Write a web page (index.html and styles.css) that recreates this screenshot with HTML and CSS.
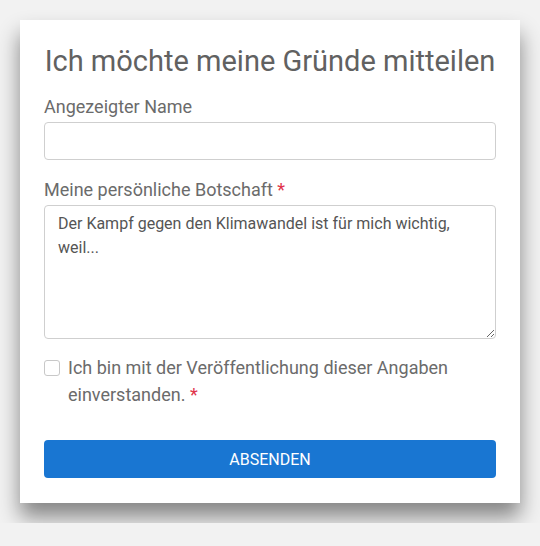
FILE: index.html
```html
<!DOCTYPE html>
<html lang="de">
<head>
    <meta charset="UTF-8">
    <meta name="viewport" content="width=device-width, initial-scale=1.0">
    <title>Meine Gründe</title>
    <link rel="stylesheet" href="styles.css">
</head>
<body>
    <div class="card">
        <h2 class="title">Ich möchte meine Gründe mitteilen</h2>
        <form class="reason-form">
            <label class="field-label" for="displayName">Angezeigter Name</label>
            <input class="field-input" type="text" id="displayName" name="displayName">

            <label class="field-label" for="message">Meine persönliche Botschaft <span class="required">*</span></label>
            <textarea class="field-text" id="message" name="message">Der Kampf gegen den Klimawandel ist für mich wichtig, weil...</textarea>

            <div class="consent">
                <input class="consent-box" type="checkbox" id="consent" name="consent">
                <label class="consent-label" for="consent">Ich bin mit der Veröffentlichung dieser Angaben einverstanden. <span class="required">*</span></label>
            </div>

            <button class="submit-button" type="button">Absenden</button>
        </form>
    </div>
</body>
</html>
```

FILE: styles.css
```css
body {
    font-family: Roboto, "Noto Sans", sans-serif;
    margin: 0;
    padding: 20px;
    background-color: #f2f2f2;
}

.card {
    width: 452px;
    background-color: #fff;
    padding: 16px 24px 25px;
    box-shadow: 0 14px 20px rgba(0, 0, 0, 0.45);
}

.title {
    margin: 0 0 9px;
    text-align: center;
    font-size: 29px;
    font-weight: 400;
    line-height: 50px;
    color: #616161;
}

.reason-form {
    display: flex;
    flex-direction: column;
}

.field-label {
    font-size: 18px;
    line-height: 24px;
    color: #6b6b6b;
    margin-bottom: 3px;
}

.required {
    color: #e0334a;
}

.field-input,
.field-text {
    box-sizing: border-box;
    width: 100%;
    border: 1px solid #cfcfcf;
    border-radius: 4px;
    font-family: inherit;
    font-size: 16px;
    color: #555;
    margin: 0;
}

.field-input {
    height: 38px;
    padding: 6px 12px;
    margin-bottom: 18px;
}

.field-text {
    height: 134px;
    padding: 6px 13px;
    line-height: 24px;
    resize: vertical;
}

.consent {
    display: flex;
    align-items: flex-start;
    gap: 8px;
    margin-top: 15px;
}

.consent-box {
    appearance: none;
    flex: none;
    width: 16px;
    height: 16px;
    margin: 6px 0 0;
    border: 1px solid #c8c8c8;
    border-radius: 3px;
    background-color: #fff;
}

.consent-label {
    font-size: 18px;
    line-height: 27px;
    color: #6b6b6b;
}

.submit-button {
    margin-top: 32px;
    height: 38px;
    border: none;
    border-radius: 4px;
    background-color: #1976d2;
    color: #fff;
    font-family: inherit;
    font-size: 16px;
    text-transform: uppercase;
}
```
